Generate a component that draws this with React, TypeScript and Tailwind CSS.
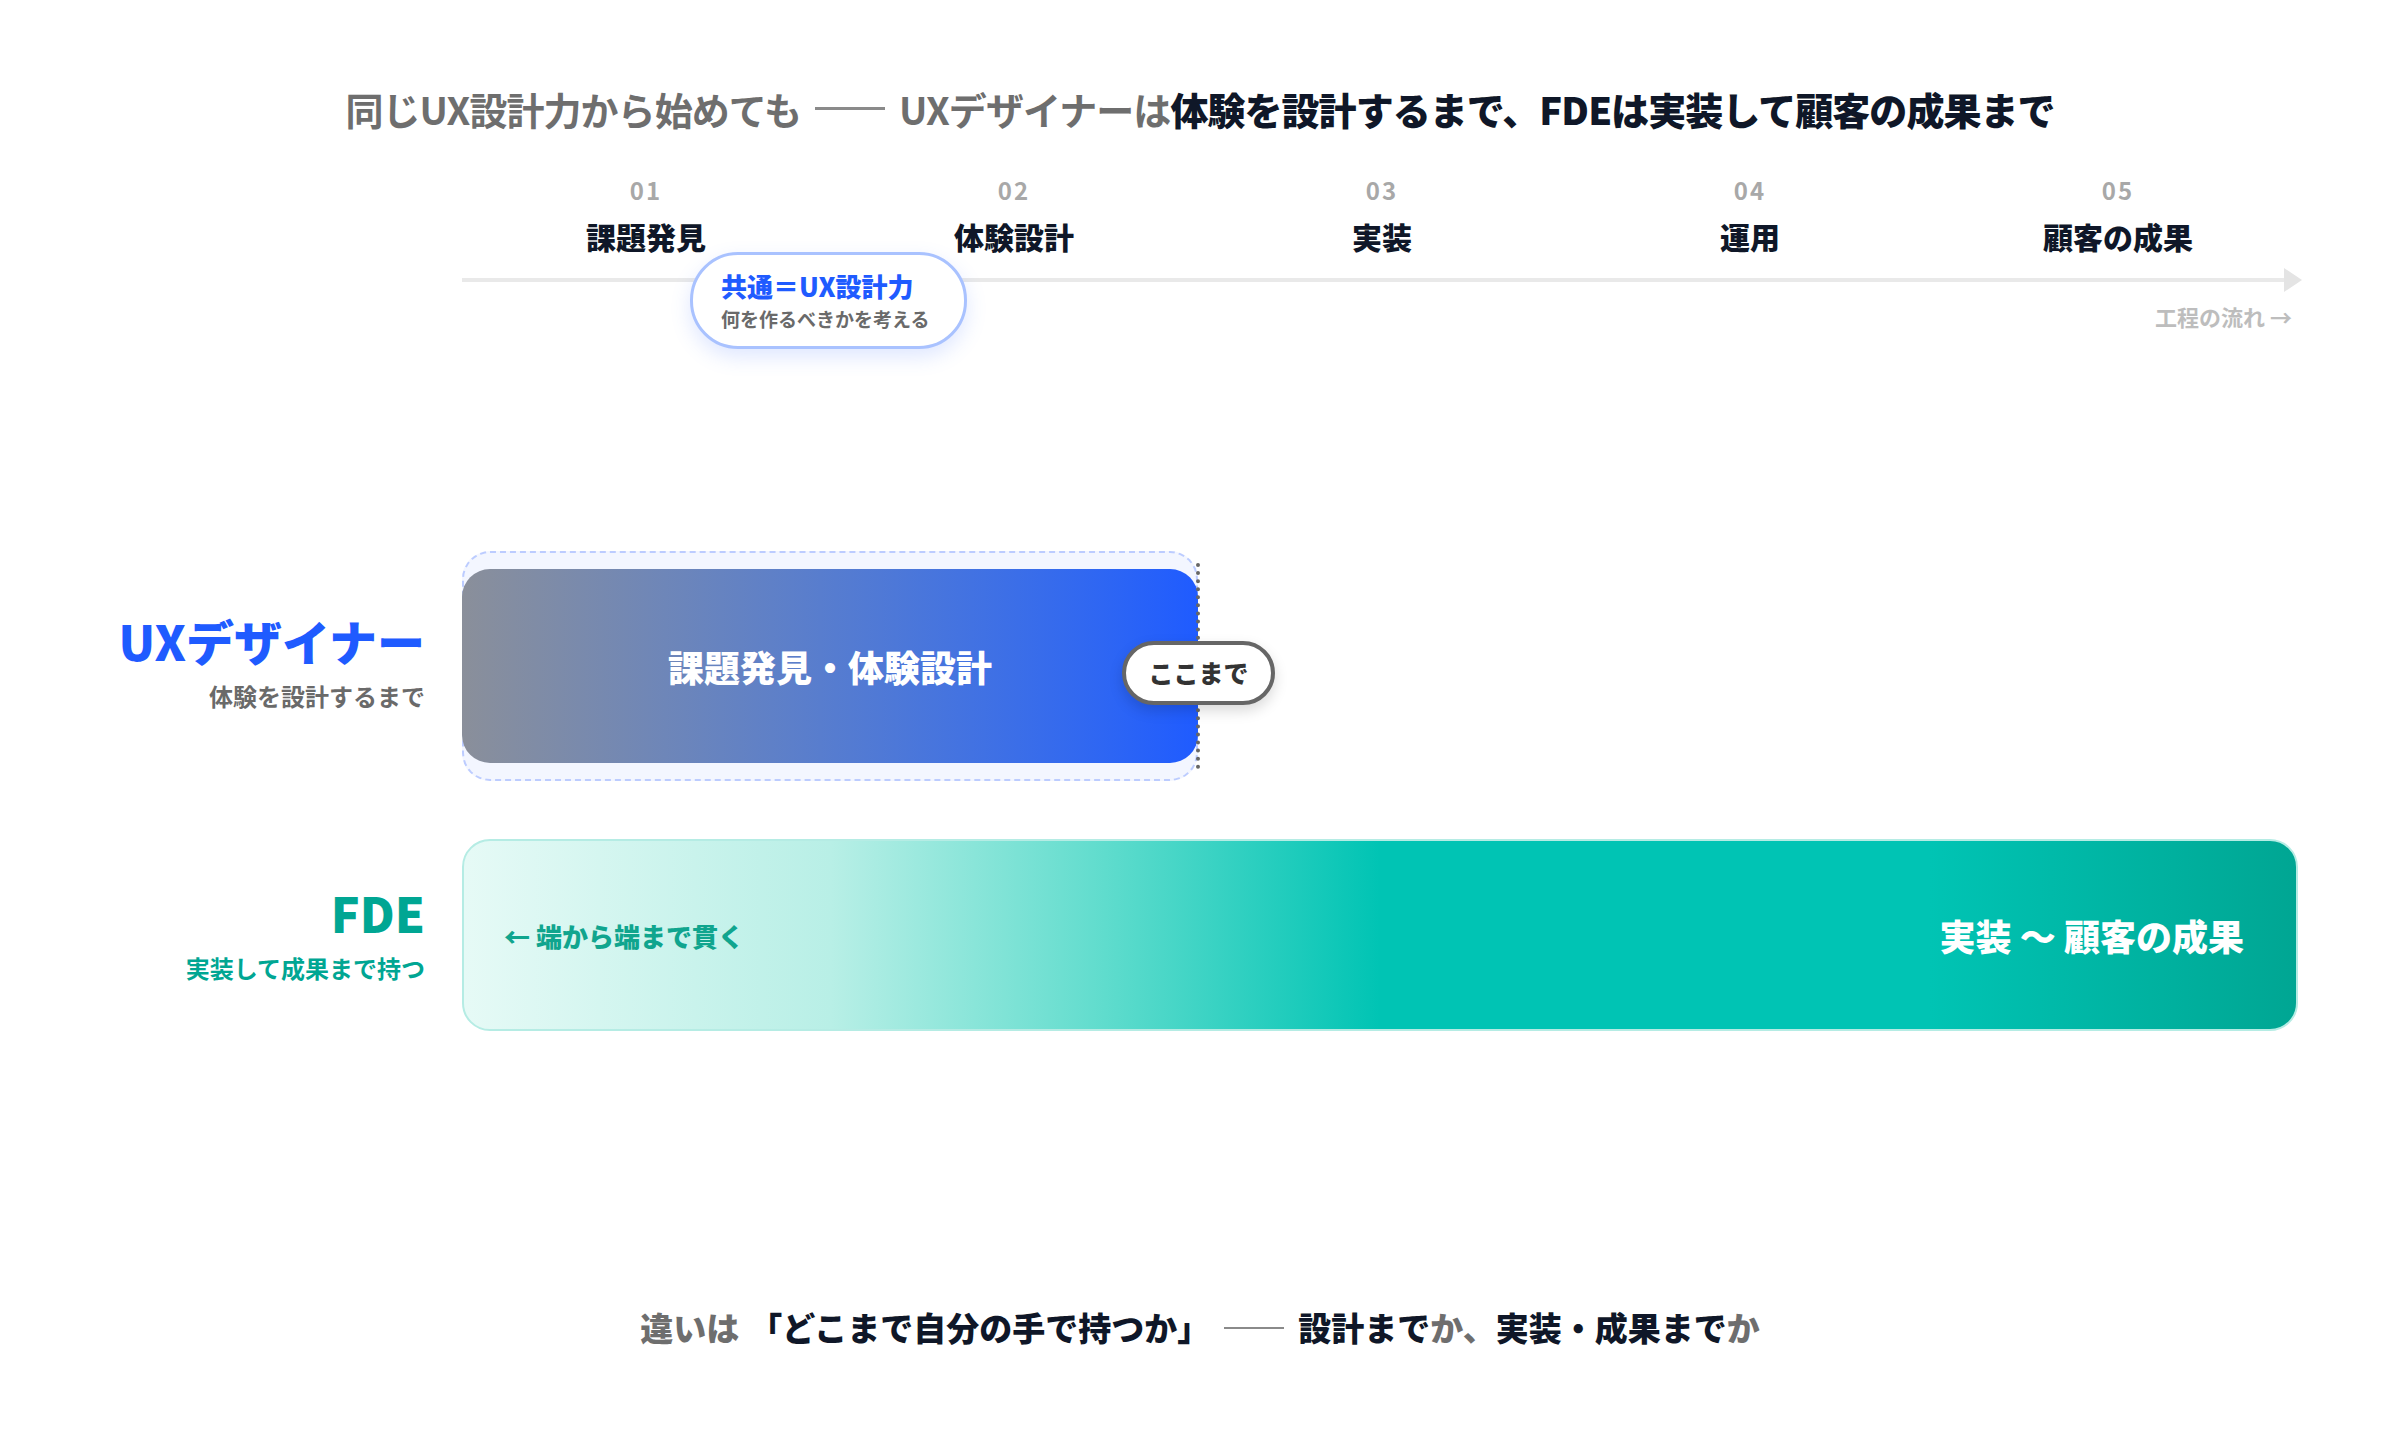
import React from "react";

const F = { fontFamily: '"Noto Sans CJK JP", "Noto Sans", sans-serif' };
const steps = [
  ["01", "課題発見"],
  ["02", "体験設計"],
  ["03", "実装"],
  ["04", "運用"],
  ["05", "顧客の成果"],
];

export default function App() {
  return (
    <div style={F} className="w-[2400px] h-[1440px] bg-white flex flex-col items-center">
      <div className="mt-[82px] h-[52px] flex items-center text-[38px] font-bold tracking-tight">
        <span className="text-[#6e6e6e]">同じUX設計力から始めても</span>
        <span className="inline-block w-[70px] h-[3px] bg-[#8a8a8a] mx-[14px]" />
        <span className="text-[#6e6e6e]">UXデザイナーは</span>
        <span className="text-[#0f1728] font-black">体験を設計するまで、FDEは実装して顧客の成果まで</span>
      </div>

      <div className="w-[2400px] flex pl-[462px]">
        <div className="w-[1840px] flex flex-col">
          <div className="grid grid-cols-5 mt-[40px]">
            {steps.map(([n, l]) => (
              <div key={n} className="flex flex-col items-center">
                <div className="text-[24px] font-bold tracking-[2px] text-[#a8a8a8] leading-[32px]">{n}</div>
                <div className="text-[30px] font-black text-[#0f1728] leading-[40px] mt-[10px]">{l}</div>
              </div>
            ))}
          </div>
          <div className="relative mt-[22px] h-[80px]">
            <div className="absolute left-0 right-[10px] top-[0px] h-[4px] bg-[#e9e9e9]" />
            <div className="absolute right-0 top-[-10px] w-0 h-0 border-y-[12px] border-y-transparent border-l-[18px] border-l-[#e4e4e4]" />
            <div className="absolute right-[10px] top-[22px] text-[22px] font-bold text-[#bdbdbd]">工程の流れ →</div>
            <div className="absolute left-[228px] top-[-26px] w-[277px] h-[97px] rounded-[48px] bg-white border-[3px] border-[#a9c2ff] shadow-[0_8px_20px_rgba(80,120,255,0.18)] flex flex-col justify-center pl-[28px]">
              <div className="text-[26px] font-black text-[#1f5bff] leading-[34px]">共通＝UX設計力</div>
              <div className="text-[19px] font-bold text-[#6a6a6a] leading-[28px] mt-[2px]">何を作るべきかを考える</div>
            </div>
          </div>
        </div>
      </div>

      <div className="w-[2400px] flex mt-[193px]">
        <div className="w-[425px] flex flex-col items-end justify-center pb-[6px]">
          <div className="text-[48px] font-black text-[#1f5bff] leading-[56px]">UXデザイナー</div>
          <div className="text-[24px] font-bold text-[#6a6a6a] mt-[10px]">体験を設計するまで</div>
        </div>
        <div className="ml-[37px] relative w-[736px] h-[230px] rounded-[28px] border-2 border-dashed border-[#bcccff] bg-[#f3f6ff]">
          <div className="absolute left-[-2px] right-[-2px] top-[16px] h-[194px] rounded-[28px] bg-gradient-to-r from-[#8a8f9a] to-[#1f5bff] flex items-center justify-center">
            <span className="text-[36px] font-black text-white">課題発見・体験設計</span>
          </div>
          <div className="absolute right-[-4px] top-[10px] bottom-[10px] border-r-[4px] border-dotted border-[#666]" />
          <div className="absolute left-[658px] top-[88px] w-[153px] h-[64px] rounded-[32px] bg-white border-[4px] border-[#666] shadow-[0_6px_14px_rgba(0,0,0,0.15)] flex items-center justify-center">
            <span className="text-[25px] font-black text-[#333]">ここまで</span>
          </div>
        </div>
      </div>

      <div className="w-[2400px] flex mt-[58px]">
        <div className="w-[425px] flex flex-col items-end justify-center">
          <div className="text-[48px] font-black text-[#00a693] leading-[56px]">FDE</div>
          <div className="text-[24px] font-bold text-[#00a693] mt-[10px]">実装して成果まで持つ</div>
        </div>
        <div className="ml-[37px] w-[1836px] h-[192px] rounded-[28px] border-2 border-[#b5ece4] bg-[linear-gradient(90deg,#e6faf6_0%,#b8efe6_20%,#5fdccd_35%,#00c4b4_50%,#00c4b4_80%,#00a693_100%)] flex items-center justify-between pl-[40px] pr-[52px]">
          <span className="text-[26px] font-black text-[#10a58e]">← 端から端まで貫く</span>
          <span className="text-[36px] font-black text-white">実装 〜 顧客の成果</span>
        </div>
      </div>

      <div className="mt-[272px] flex items-center text-[33px] font-black">
        <span className="text-[#6e6e6e]">違いは</span>
        <span className="text-[#0f1728] ml-[10px]">「どこまで自分の手で持つか」</span>
        <span className="inline-block w-[60px] h-[2px] bg-[#8a8a8a] mx-[14px]" />
        <span className="text-[#0f1728]">設計まで</span>
        <span className="text-[#6e6e6e]">か、</span>
        <span className="text-[#0f1728]">実装・成果まで</span>
        <span className="text-[#6e6e6e]">か</span>
      </div>
    </div>
  );
}
